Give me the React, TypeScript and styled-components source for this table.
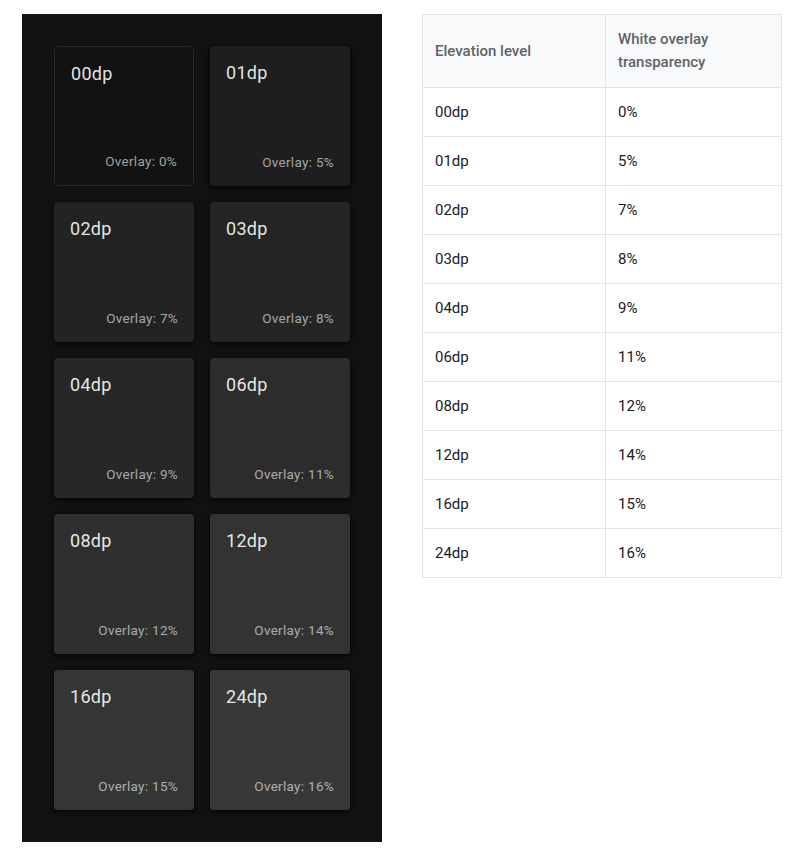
import styled, { createGlobalStyle } from "styled-components";

const GlobalStyle = createGlobalStyle`
  body {
    margin: 0;
    background: #ffffff;
    font-family: Roboto, "Liberation Sans", sans-serif;
  }
`;

const Page = styled.div`
  display: flex;
  align-items: flex-start;
  gap: 40px;
  padding: 14px 0 0 22px;
`;

const DarkPanel = styled.div`
  background: #121212;
  padding: 32px;
  display: grid;
  grid-template-columns: repeat(2, 140px);
  grid-auto-rows: 140px;
  gap: 16px;
`;

const Card = styled.div<{ $overlay: number; $flat?: boolean }>`
  box-sizing: border-box;
  border-radius: 4px;
  padding: 16px 16px 16px 16px;
  display: flex;
  flex-direction: column;
  justify-content: space-between;
  background: linear-gradient(
      rgba(255, 255, 255, ${(p) => p.$overlay / 100}),
      rgba(255, 255, 255, ${(p) => p.$overlay / 100})
    ),
    #121212;
  border: ${(p) => (p.$flat ? "1px solid #2a2a2a" : "none")};
  box-shadow: ${(p) =>
    p.$flat
      ? "none"
      : "0 2px 4px rgba(0,0,0,0.5), 0 1px 8px rgba(0,0,0,0.35)"};
`;

const CardTitle = styled.div`
  font-size: 18px;
  line-height: 22px;
  color: rgba(255, 255, 255, 0.9);
  letter-spacing: 0.3px;
`;

const CardOverlay = styled.div`
  align-self: flex-end;
  font-size: 13.5px;
  line-height: 16px;
  color: rgba(255, 255, 255, 0.6);
  letter-spacing: 0.3px;
`;

const Table = styled.table`
  border-collapse: collapse;
  width: 360px;
  font-size: 15px;
  color: #202124;
`;

const HeadCell = styled.th`
  text-align: left;
  font-weight: 500;
  color: #5f6368;
  background: #f8f9fa;
  border: 1px solid #e3e3e3;
  padding: 0 12px;
  height: 72px;
  line-height: 23px;
  vertical-align: middle;
`;

const Cell = styled.td`
  border: 1px solid #e3e3e3;
  padding: 0 12px;
  height: 48px;
  vertical-align: middle;
`;

const levels = [
  { dp: "00dp", overlay: 0 },
  { dp: "01dp", overlay: 5 },
  { dp: "02dp", overlay: 7 },
  { dp: "03dp", overlay: 8 },
  { dp: "04dp", overlay: 9 },
  { dp: "06dp", overlay: 11 },
  { dp: "08dp", overlay: 12 },
  { dp: "12dp", overlay: 14 },
  { dp: "16dp", overlay: 15 },
  { dp: "24dp", overlay: 16 },
];

export default function App() {
  return (
    <>
      <GlobalStyle />
      <Page>
        <DarkPanel>
          {levels.map((l) => (
            <Card key={l.dp} $overlay={l.overlay} $flat={l.overlay === 0}>
              <CardTitle>{l.dp}</CardTitle>
              <CardOverlay>Overlay: {l.overlay}%</CardOverlay>
            </Card>
          ))}
        </DarkPanel>
        <Table>
          <colgroup>
            <col style={{ width: 183 }} />
            <col />
          </colgroup>
          <thead>
            <tr>
              <HeadCell>Elevation level</HeadCell>
              <HeadCell>
                White overlay
                <br />
                transparency
              </HeadCell>
            </tr>
          </thead>
          <tbody>
            {levels.map((l) => (
              <tr key={l.dp}>
                <Cell>{l.dp}</Cell>
                <Cell>{l.overlay}%</Cell>
              </tr>
            ))}
          </tbody>
        </Table>
      </Page>
    </>
  );
}
